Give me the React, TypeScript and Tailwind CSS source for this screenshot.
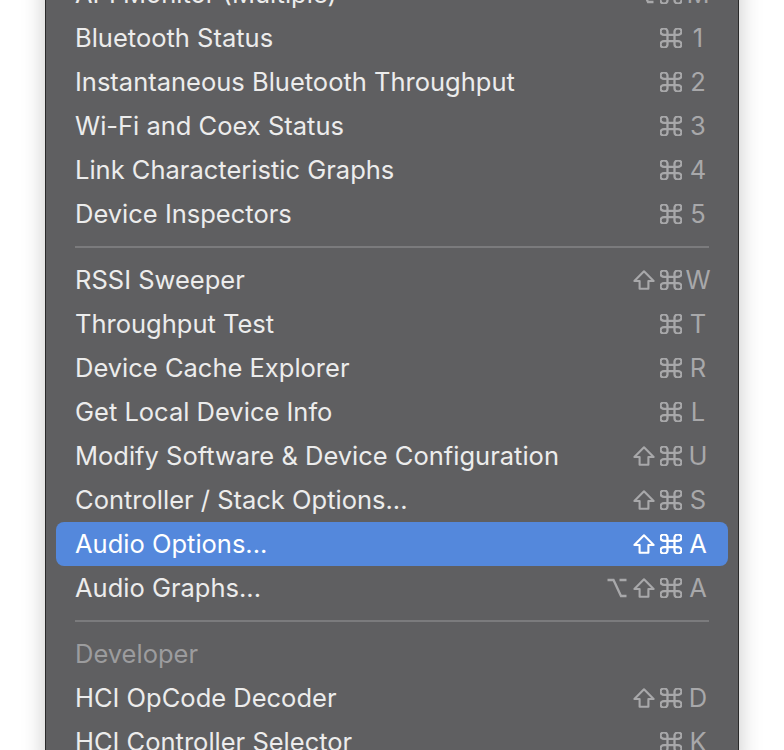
import React from "react";

type Mod = "opt" | "shift" | "cmd";
type Item = { label: string; mods: Mod[]; key: string; highlighted?: boolean };

const group1: Item[] = [
  { label: "API Monitor (Multiple)", mods: ["opt", "cmd"], key: "M" },
  { label: "Bluetooth Status", mods: ["cmd"], key: "1" },
  { label: "Instantaneous Bluetooth Throughput", mods: ["cmd"], key: "2" },
  { label: "Wi-Fi and Coex Status", mods: ["cmd"], key: "3" },
  { label: "Link Characteristic Graphs", mods: ["cmd"], key: "4" },
  { label: "Device Inspectors", mods: ["cmd"], key: "5" },
];

const group2: Item[] = [
  { label: "RSSI Sweeper", mods: ["shift", "cmd"], key: "W" },
  { label: "Throughput Test", mods: ["cmd"], key: "T" },
  { label: "Device Cache Explorer", mods: ["cmd"], key: "R" },
  { label: "Get Local Device Info", mods: ["cmd"], key: "L" },
  { label: "Modify Software & Device Configuration", mods: ["shift", "cmd"], key: "U" },
  { label: "Controller / Stack Options...", mods: ["shift", "cmd"], key: "S" },
  { label: "Audio Options...", mods: ["shift", "cmd"], key: "A", highlighted: true },
  { label: "Audio Graphs...", mods: ["opt", "shift", "cmd"], key: "A" },
];

const group3: Item[] = [
  { label: "HCI OpCode Decoder", mods: ["shift", "cmd"], key: "D" },
  { label: "HCI Controller Selector", mods: ["cmd"], key: "K" },
];

function ModIcon({ m }: { m: Mod }) {
  const common = {
    width: 22,
    height: 20,
    fill: "none",
    stroke: "currentColor",
    strokeLinejoin: "round" as const,
    strokeLinecap: "round" as const,
  };
  if (m === "opt") {
    return (
      <svg {...common} viewBox="0 0 22 20" strokeWidth={2.3}>
        <path d="M1.5 2 H7.5 L15 18 H20.5 M13.5 2 H20.5" strokeLinecap="butt" strokeLinejoin="miter" />
      </svg>
    );
  }
  if (m === "shift") {
    return (
      <svg {...common} viewBox="0 0 22 20" strokeWidth={2.1}>
        <path d="M11 1.3 L20.6 11 H15.4 V18.8 H6.6 V11 H1.4 Z" />
      </svg>
    );
  }
  return (
    <svg {...common} viewBox="2.6 2.6 18.8 18.8" preserveAspectRatio="none">
      <path
        d="M15 6v12a3 3 0 1 0 3-3H6a3 3 0 1 0 3 3V6a3 3 0 1 0-3 3h12a3 3 0 1 0-3-3"
        strokeWidth={2.3}
        vectorEffect="non-scaling-stroke"
      />
    </svg>
  );
}

function Row({ item }: { item: Item }) {
  const hl = item.highlighted;
  return (
    <div
      className={
        "mx-[10px] h-[44px] flex items-center justify-between pl-[19px] pr-[16px] rounded-[8px] " +
        (hl ? "bg-[#5488dc] text-white" : "text-[#ececec]")
      }
    >
      <span className="text-[25.5px] leading-none">{item.label}</span>
      <span className={"flex items-center text-[25.5px] leading-none " + (hl ? "text-white" : "text-[#a8a8aa]")}>
        <span className="flex items-center gap-[5px]">
          {item.mods.map((m, i) => (
            <ModIcon key={i} m={m} />
          ))}
        </span>
        <span className="ml-[2px] w-[28px] text-center">{item.key}</span>
      </span>
    </div>
  );
}

function Separator() {
  return (
    <div className="h-[22px] flex items-center px-[29px]">
      <div className="h-[2px] w-full bg-[#7b7b7d]" />
    </div>
  );
}

export default function App() {
  return (
    <div className="w-full h-[750px] bg-white overflow-hidden font-['Inter','Noto_Sans',sans-serif]">
      <div className="ml-[45px] w-[694px] mt-[-28px] h-[800px] bg-[#5f5f61] border-x border-[#2a2a2a] shadow-[0_0_22px_rgba(0,0,0,0.22)]">
        {group1.map((it) => (
          <Row key={it.label} item={it} />
        ))}
        <Separator />
        {group2.map((it) => (
          <Row key={it.label} item={it} />
        ))}
        <Separator />
        <div className="h-[44px] flex items-center pl-[29px] text-[25.5px] leading-none text-[#9c9c9e]">Developer</div>
        {group3.map((it) => (
          <Row key={it.label} item={it} />
        ))}
      </div>
    </div>
  );
}
